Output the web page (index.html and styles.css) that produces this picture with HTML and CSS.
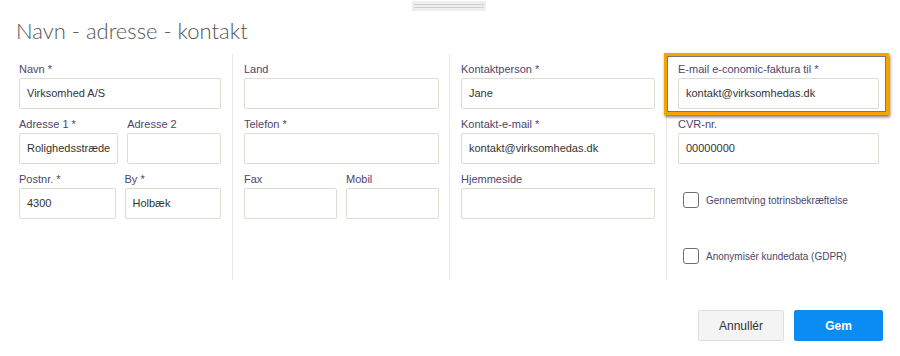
FILE: index.html
```html
<!DOCTYPE html>
<html lang="da">
<head>
    <meta charset="UTF-8">
    <title>Navn - adresse - kontakt</title>
    <link rel="stylesheet" href="styles.css">
</head>
<body>
    <div class="dialog">
        <div class="handle"></div>
        <h1 class="title">Navn - adresse - kontakt</h1>

        <div class="columns">
            <div class="col col-1">
                <div class="field">
                    <label>Navn *</label>
                    <div class="input">Virksomhed A/S</div>
                </div>
                <div class="pair">
                    <div class="field">
                        <label>Adresse 1 *</label>
                        <div class="input">Rolighedsstræde</div>
                    </div>
                    <div class="field">
                        <label>Adresse 2</label>
                        <div class="input"></div>
                    </div>
                </div>
                <div class="pair">
                    <div class="field">
                        <label>Postnr. *</label>
                        <div class="input">4300</div>
                    </div>
                    <div class="field">
                        <label>By *</label>
                        <div class="input">Holbæk</div>
                    </div>
                </div>
            </div>

            <div class="col col-2">
                <div class="field">
                    <label>Land</label>
                    <div class="input"></div>
                </div>
                <div class="field">
                    <label>Telefon *</label>
                    <div class="input"></div>
                </div>
                <div class="pair">
                    <div class="field">
                        <label>Fax</label>
                        <div class="input"></div>
                    </div>
                    <div class="field">
                        <label>Mobil</label>
                        <div class="input"></div>
                    </div>
                </div>
            </div>

            <div class="col col-3">
                <div class="field">
                    <label>Kontaktperson *</label>
                    <div class="input">Jane</div>
                </div>
                <div class="field">
                    <label>Kontakt-e-mail *</label>
                    <div class="input">kontakt@virksomhedas.dk</div>
                </div>
                <div class="field">
                    <label>Hjemmeside</label>
                    <div class="input"></div>
                </div>
            </div>

            <div class="col col-4">
                <div class="field highlight">
                    <label>E-mail e-conomic-faktura til *</label>
                    <div class="input">kontakt@virksomhedas.dk</div>
                </div>
                <div class="field">
                    <label>CVR-nr.</label>
                    <div class="input">00000000</div>
                </div>
                <div class="check first">
                    <span class="box"></span>
                    <span>Gennemtving totrinsbekræftelse</span>
                </div>
                <div class="check">
                    <span class="box"></span>
                    <span>Anonymisér kundedata (GDPR)</span>
                </div>
            </div>
        </div>

        <div class="actions">
            <button class="btn btn-cancel">Annullér</button>
            <button class="btn btn-save">Gem</button>
        </div>
    </div>
</body>
</html>
```

FILE: styles.css
```css
body {
    margin: 0;
    background: #fff;
    font-family: "Liberation Sans", Arial, sans-serif;
    color: #333;
}

.dialog {
    width: 900px;
    height: 356px;
    position: relative;
}

.handle {
    position: absolute;
    left: 412px;
    top: 1px;
    width: 74px;
    height: 10px;
    background: #eeeeee;
}

.handle::before,
.handle::after {
    content: "";
    position: absolute;
    left: 2px;
    right: 2px;
    height: 1px;
    background: #cfcfcf;
}

.handle::before { top: 3px; }
.handle::after { top: 6px; }

.title {
    margin: 0;
    padding: 17px 0 0 16px;
    font-family: Lato, "Open Sans", sans-serif;
    font-weight: 300;
    font-size: 22px;
    line-height: 28px;
    color: #555;
}

.columns {
    display: flex;
    margin-top: 9px;
    padding-left: 19px;
}

.col {
    padding-top: 8px;
    height: 218px;
}

.col-1 {
    width: 202px;
    padding-right: 11px;
}

.col-2 {
    width: 195px;
    padding: 8px 10px 0 11px;
    border-left: 1px solid #e6e6e6;
}

.col-3 {
    width: 194px;
    padding: 8px 11px 0 11px;
    border-left: 1px solid #e6e6e6;
}

.col-4 {
    width: 201px;
    padding: 8px 0 0 11px;
    border-left: 1px solid #e6e6e6;
}

.field {
    margin-bottom: 8px;
}

.field label {
    display: block;
    font-size: 11px;
    line-height: 14px;
    margin-bottom: 2px;
    color: #4d456c;
    white-space: nowrap;
}

.input {
    box-sizing: border-box;
    height: 31px;
    border: 1px solid #dcdcd2;
    border-radius: 2px;
    padding: 0 7px;
    font-size: 11px;
    line-height: 29px;
    color: #333;
    white-space: nowrap;
    overflow: hidden;
}

.pair {
    display: grid;
    grid-template-columns: 1fr 1fr;
    gap: 9px;
}

.highlight {
    position: relative;
}

.highlight::after {
    content: "";
    position: absolute;
    left: -14px;
    top: -9px;
    right: -10px;
    bottom: -6px;
    border: 3px solid #f7a400;
    box-shadow: 1px 2px 3px rgba(0, 0, 0, 0.55), inset 0 0 0 1px rgba(60, 60, 60, 0.7);
    pointer-events: none;
}

.check {
    display: flex;
    align-items: center;
    margin-left: 5px;
    margin-top: 40px;
    font-size: 10px;
    color: #4d456c;
}

.check.first {
    margin-top: 28px;
}

.box {
    box-sizing: border-box;
    width: 16px;
    height: 16px;
    border: 1px solid #6f6f6f;
    border-radius: 3px;
    margin-right: 7px;
}

.actions {
    display: flex;
    justify-content: flex-end;
    gap: 10px;
    padding: 30px 17px 0 0;
}

.btn {
    box-sizing: border-box;
    height: 31px;
    border-radius: 2px;
    font-family: "Liberation Sans", Arial, sans-serif;
    font-size: 12px;
    cursor: pointer;
}

.btn-cancel {
    width: 86px;
    background: #f4f4f4;
    border: 1px solid #dedede;
    color: #333;
}

.btn-save {
    width: 89px;
    background: #0a8cf2;
    border: 1px solid #0a8cf2;
    color: #fff;
    font-weight: bold;
}
```
